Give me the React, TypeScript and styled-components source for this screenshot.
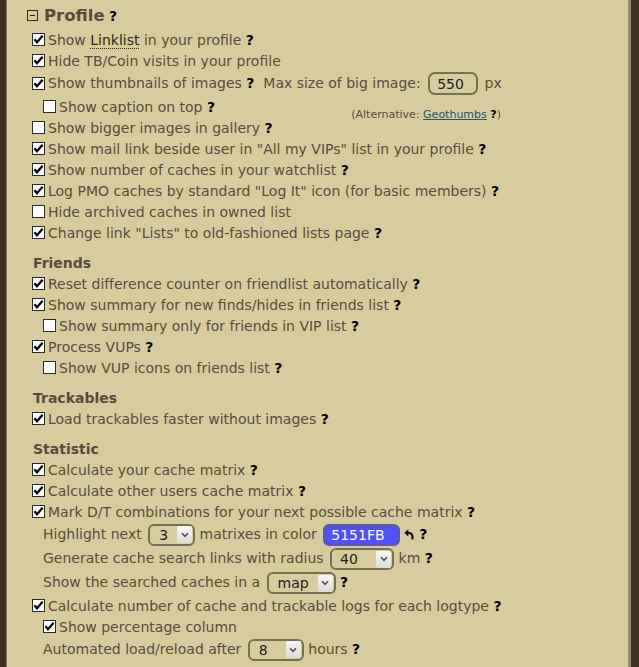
import React from 'react';
import styled, { createGlobalStyle } from 'styled-components';

const Global = createGlobalStyle`
  html, body { margin: 0; padding: 0; background: #d8cc9f; }
  body { font-family: "DejaVu Sans", Verdana, sans-serif; }
`;

const Frame = styled.div`
  width: 639px;
  height: 667px;
  display: flex;
  background: #d8cc9f;
  overflow: hidden;
`;

const EdgeLeft = styled.div`
  flex: none;
  width: 6px;
  background: #3f2f20;
  border-right: 1px solid #7d7855;
`;

const EdgeRight = styled.div`
  flex: none;
  width: 8px;
  background: #3f2f20;
  border-left: 3px solid #8e8d6c;
`;

const Content = styled.div`
  flex: 1;
  padding-top: 2px;
  padding-left: 1px;
  color: #5a4b3c;
  font-size: 14px;
`;

const Header = styled.div`
  height: 27px;
  display: flex;
  align-items: center;
  padding-left: 19px;
`;

const Toggle = styled.span`
  width: 11px;
  height: 11px;
  box-sizing: border-box;
  border: 1px solid #2b2b2b;
  display: inline-flex;
  align-items: center;
  justify-content: center;
  margin-right: 6px;
  &::after {
    content: '';
    width: 5px;
    height: 1px;
    background: #1e1e1e;
  }
`;

const Title = styled.span`
  font-weight: bold;
  font-size: 16.5px;
  color: #5a4a3b;
`;

const Section = styled.div`
  padding-top: 9px;
`;

const SectionTitle = styled.div`
  height: 21px;
  display: flex;
  align-items: center;
  padding-left: 25px;
  font-weight: bold;
  font-size: 14px;
  color: #5a4a3b;
`;

const Row = styled.div<{ $h?: number; $indent?: boolean }>`
  height: ${(p) => p.$h ?? 21}px;
  display: flex;
  align-items: center;
  padding-left: ${(p) => (p.$indent ? 35 : 24)}px;
  white-space: pre;
`;

const CaptionRow = styled(Row)`
  box-sizing: border-box;
  width: 493px;
  justify-content: space-between;
`;

const Inline = styled.span`
  display: flex;
  align-items: center;
`;

const Label = styled.span`
  white-space: pre;
`;

const Help = styled.b`
  color: #000;
  font-weight: bold;
`;

const LinkText = styled.span`
  color: #2a2618;
  border-bottom: 1px dotted #2a2618;
`;

const Box = styled.span`
  flex: none;
  width: 13px;
  height: 13px;
  box-sizing: border-box;
  border: 1px solid #2a2a2a;
  background: #fff;
  margin-right: 3px;
  display: inline-flex;
  align-items: center;
  justify-content: center;
`;

const Alt = styled.span`
  align-self: flex-end;
  font-size: 11px;
  line-height: 12px;
  margin-bottom: -4px;
  color: #5a4b3c;
`;

const AltLink = styled.span`
  color: #1c5570;
  text-decoration: underline;
`;

const TextBox = styled.span<{ $w: number }>`
  display: inline-flex;
  align-items: center;
  vertical-align: middle;
  box-sizing: border-box;
  width: ${(p) => p.$w}px;
  height: 23px;
  border: 2px solid #72744f;
  border-radius: 7px;
  padding-left: 7px;
  color: #1d1d1d;
  margin-left: 3px;
  margin-right: 2px;
`;

const SelectBox = styled.span<{ $w: number; $pad: number }>`
  display: inline-flex;
  align-items: center;
  justify-content: space-between;
  vertical-align: middle;
  box-sizing: border-box;
  width: ${(p) => p.$w}px;
  height: 22px;
  border: 2px solid #72744f;
  border-radius: 6px;
  padding-left: ${(p) => p.$pad}px;
  padding-right: 1px;
  color: #1d1d1d;
  margin-left: 2px;
`;

const Arrow = styled.span`
  width: 15px;
  height: 17px;
  background: linear-gradient(#f6f6f4, #dedcd6);
  border-radius: 2px;
  display: inline-flex;
  align-items: center;
  justify-content: center;
`;

const ColorBox = styled.span`
  display: inline-flex;
  align-items: center;
  vertical-align: middle;
  box-sizing: border-box;
  width: 77px;
  height: 22px;
  background: #5151fb;
  border: 2px solid #5c5c9c;
  border-radius: 6px;
  padding-left: 6px;
  color: #fff;
  margin-left: 2px;
`;

const Undo = styled.svg`
  vertical-align: middle;
  margin: 0 5px 0 4px;
`;

const Check = ({ on }: { on?: boolean }) => (
  <Box>
    {on && (
      <svg width="11" height="11" viewBox="0 0 11 11">
        <path d="M1.5 5.2 L4 8.2 L9.6 1.8" fill="none" stroke="#000" strokeWidth="2.3" />
      </svg>
    )}
  </Box>
);

const Select = ({ value, w, pad }: { value: string; w: number; pad: number }) => (
  <SelectBox $w={w} $pad={pad}>
    <span>{value}</span>
    <Arrow>
      <svg width="8" height="6" viewBox="0 0 8 6">
        <path d="M1 1.2 L4 4.4 L7 1.2" fill="none" stroke="#4b4f5c" strokeWidth="1.6" />
      </svg>
    </Arrow>
  </SelectBox>
);

type Item = { on?: boolean; text: React.ReactNode; help?: boolean; indent?: boolean; h?: number };

const CheckRow = ({ on, text, help = true, indent, h }: Item) => (
  <Row $indent={indent} $h={h}>
    <Check on={on} />
    <Label>
      {text}
      {help && (
        <>
          {' '}
          <Help>?</Help>
        </>
      )}
    </Label>
  </Row>
);

export default function App() {
  return (
    <>
      <Global />
      <Frame>
        <EdgeLeft />
        <Content>
          <Header>
            <Toggle />
            <Title>Profile</Title>
            <Label> </Label>
            <Help>?</Help>
          </Header>

          <CheckRow on text={<>Show <LinkText>Linklist</LinkText> in your profile</>} />
          <CheckRow on text="Hide TB/Coin visits in your profile" help={false} />
          <Row $h={25}>
            <Check on />
            <Label>
              Show thumbnails of images <Help>?</Help>{'  '}Max size of big image: <TextBox $w={50}>550</TextBox> px
            </Label>
          </Row>
          <CaptionRow $indent>
            <Inline>
              <Check />
              <Label>
                Show caption on top <Help>?</Help>
              </Label>
            </Inline>
            <Alt>
              (Alternative: <AltLink>Geothumbs</AltLink> <Help>?</Help>)
            </Alt>
          </CaptionRow>
          <CheckRow text="Show bigger images in gallery" />
          <CheckRow on text={'Show mail link beside user in "All my VIPs" list in your profile'} />
          <CheckRow on text="Show number of caches in your watchlist" />
          <CheckRow on text={'Log PMO caches by standard "Log It" icon (for basic members)'} />
          <CheckRow text="Hide archived caches in owned list" help={false} />
          <CheckRow on text={'Change link "Lists" to old-fashioned lists page'} />

          <Section>
            <SectionTitle>Friends</SectionTitle>
            <CheckRow on text="Reset difference counter on friendlist automatically" />
            <CheckRow on text="Show summary for new finds/hides in friends list" />
            <CheckRow indent text="Show summary only for friends in VIP list" />
            <CheckRow on text="Process VUPs" />
            <CheckRow indent text="Show VUP icons on friends list" />
          </Section>

          <Section>
            <SectionTitle>Trackables</SectionTitle>
            <CheckRow on text="Load trackables faster without images" />
          </Section>

          <Section>
            <SectionTitle>Statistic</SectionTitle>
            <CheckRow on text="Calculate your cache matrix" />
            <CheckRow on text="Calculate other users cache matrix" />
            <CheckRow on text="Mark D/T combinations for your next possible cache matrix" />
            <Row $indent $h={25}>
              <Label>
                Highlight next <Select value="3" w={47} pad={9} /> matrixes in color <ColorBox>5151FB</ColorBox>
                <Undo width="10" height="11" viewBox="0 0 10 11">
                  <path d="M0.3 3.8 L4.3 0.2 L4.3 7.4 Z" fill="#111" />
                  <path d="M3.8 3.8 C7.6 3.5 9.2 6 8.3 10.4" fill="none" stroke="#111" strokeWidth="2.2" />
                </Undo>
                <Help>?</Help>
              </Label>
            </Row>
            <Row $indent $h={24}>
              <Label>
                Generate cache search links with radius <Select value="40" w={64} pad={8} /> km <Help>?</Help>
              </Label>
            </Row>
            <Row $indent $h={24}>
              <Label>
                Show the searched caches in a <Select value="map" w={69} pad={9} /> <Help>?</Help>
              </Label>
            </Row>
            <CheckRow on text="Calculate number of cache and trackable logs for each logtype" />
            <CheckRow on indent text="Show percentage column" help={false} />
            <Row $indent $h={25}>
              <Label>
                Automated load/reload after <Select value="8" w={56} pad={9} /> hours <Help>?</Help>
              </Label>
            </Row>
          </Section>
        </Content>
        <EdgeRight />
      </Frame>
    </>
  );
}
